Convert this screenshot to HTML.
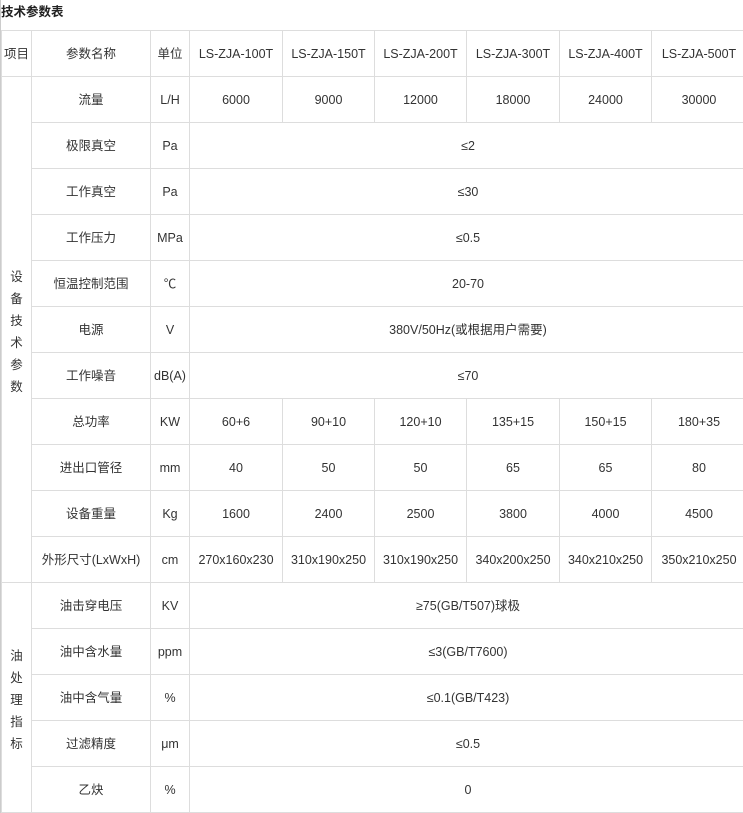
<!DOCTYPE html>
<html><head><meta charset="utf-8"><style>
html,body{margin:0;padding:0;background:#fff;width:743px;height:813px;overflow:hidden}
body{font-family:"Liberation Sans","Noto Sans CJK SC",sans-serif;color:#333;font-size:12.5px}
.t{position:absolute;left:1px;top:1px;font-weight:bold;font-size:12.5px;color:#222}
.lb{position:absolute;left:0;top:0;width:1px;height:813px;background:#ccc}
table{position:absolute;left:1px;top:30px;border-collapse:collapse;table-layout:fixed;width:745px}
td{border:1px solid #ddd;height:45px;padding:0;text-align:center;vertical-align:middle;line-height:16px;white-space:nowrap;overflow:hidden}
.v{line-height:22px;white-space:normal;padding-top:4px}
</style></head><body>
<div class="lb"></div>
<div class="t">技术参数表</div>
<table>
<colgroup><col style="width:30px"><col style="width:119px"><col style="width:39px"><col style="width:93px"><col style="width:92px"><col style="width:92px"><col style="width:93px"><col style="width:92px"><col style="width:95px"></colgroup>
<tr><td>项目</td><td>参数名称</td><td>单位</td><td>LS-ZJA-100T</td><td>LS-ZJA-150T</td><td>LS-ZJA-200T</td><td>LS-ZJA-300T</td><td>LS-ZJA-400T</td><td>LS-ZJA-500T</td></tr>
<tr><td rowspan="11" class="v">设<br>备<br>技<br>术<br>参<br>数</td><td>流量</td><td>L/H</td><td>6000</td><td>9000</td><td>12000</td><td>18000</td><td>24000</td><td>30000</td></tr>
<tr><td>极限真空</td><td>Pa</td><td colspan="6">≤2</td></tr>
<tr><td>工作真空</td><td>Pa</td><td colspan="6">≤30</td></tr>
<tr><td>工作压力</td><td>MPa</td><td colspan="6">≤0.5</td></tr>
<tr><td>恒温控制范围</td><td>℃</td><td colspan="6">20-70</td></tr>
<tr><td>电源</td><td>V</td><td colspan="6">380V/50Hz(或根据用户需要)</td></tr>
<tr><td>工作噪音</td><td>dB(A)</td><td colspan="6">≤70</td></tr>
<tr><td>总功率</td><td>KW</td><td>60+6</td><td>90+10</td><td>120+10</td><td>135+15</td><td>150+15</td><td>180+35</td></tr>
<tr><td>进出口管径</td><td>mm</td><td>40</td><td>50</td><td>50</td><td>65</td><td>65</td><td>80</td></tr>
<tr><td>设备重量</td><td>Kg</td><td>1600</td><td>2400</td><td>2500</td><td>3800</td><td>4000</td><td>4500</td></tr>
<tr><td>外形尺寸(LxWxH)</td><td>cm</td><td>270x160x230</td><td>310x190x250</td><td>310x190x250</td><td>340x200x250</td><td>340x210x250</td><td>350x210x250</td></tr>
<tr><td rowspan="5" class="v">油<br>处<br>理<br>指<br>标</td><td>油击穿电压</td><td>KV</td><td colspan="6">≥75(GB/T507)球极</td></tr>
<tr><td>油中含水量</td><td>ppm</td><td colspan="6">≤3(GB/T7600)</td></tr>
<tr><td>油中含气量</td><td>%</td><td colspan="6">≤0.1(GB/T423)</td></tr>
<tr><td>过滤精度</td><td>μm</td><td colspan="6">≤0.5</td></tr>
<tr><td>乙炔</td><td>%</td><td colspan="6">0</td></tr>
</table>
</body></html>
